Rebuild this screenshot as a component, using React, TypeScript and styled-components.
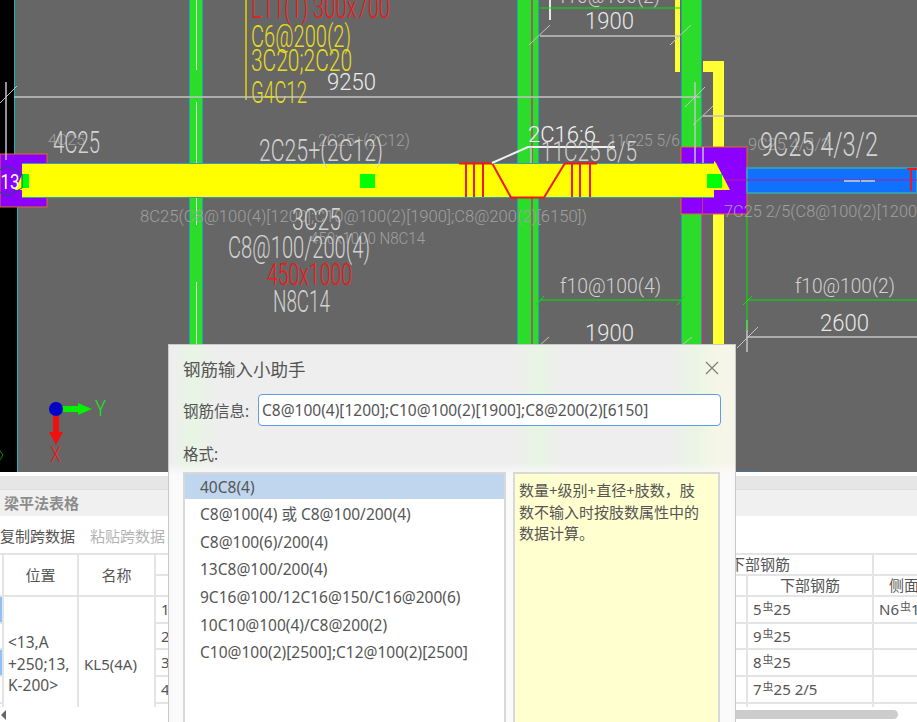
import styled, { createGlobalStyle } from "styled-components";

const GlobalStyle = createGlobalStyle`
	html, body {
		margin: 0;
		padding: 0;
		background: #ffffff;
		font-family: "Noto Sans", "Noto Sans CJK SC", sans-serif;
	}
`;

const Page = styled.div`
	position: relative;
	width: 917px;
	height: 722px;
	overflow: hidden;
	display: flex;
	flex-direction: column;
	color: #555555;
`;

const Viewport = styled.div`
	height: 472px;
	flex: none;
	background: #666666;
	svg {
		display: block;
	}
`;

const Panel = styled.section`
	flex: 1;
	min-height: 0;
	display: flex;
	flex-direction: column;
	background: #ffffff;
	padding-top: 4px;
`;

const PanelGrip = styled.div`
	height: 14px;
	background: #e6e6e6;
	border-bottom: 1px solid #dcdcdc;
`;

const PanelTitle = styled.h2`
	margin: 0;
	height: 26px;
	line-height: 26px;
	padding-left: 4px;
	background: #f0f0f0;
	font-size: 15px;
	font-weight: 700;
	color: #8c8c8c;
`;

const Toolbar = styled.div`
	height: 36px;
	flex: none;
	display: flex;
	align-items: center;
	gap: 15px;
	border-top: 1px solid #ffffff;
`;

const ToolButton = styled.span<{ $disabled?: boolean }>`
	font-size: 15px;
	color: ${(p) => (p.$disabled ? "#b4b4b4" : "#555555")};
`;

const TableClip = styled.div`
	height: 154px;
	flex: none;
	overflow: hidden;
`;

const Table = styled.table`
	width: 935px;
	table-layout: fixed;
	border-collapse: collapse;
	font-size: 15px;
	line-height: 19px;
	border-top: 2px solid #e4e4e4;
`;

const HeadCell = styled.th<{ $right?: number }>`
	padding: 0 ${(p) => p.$right ?? 0}px 0 0;
	font-weight: 400;
	text-align: ${(p) => (p.$right ? "right" : "center")};
	border-right: 2px solid #e4e4e4;
	border-bottom: 2px solid #e4e4e4;
	color: #555555;
	white-space: nowrap;
	overflow: hidden;
`;

const Cell = styled.td<{ $selected?: boolean }>`
	padding: 0 0 0 5px;
	border-right: 2px solid #e4e4e4;
	border-bottom: 2px solid #e4e4e4;
	white-space: nowrap;
	overflow: hidden;
	background: ${(p) => (p.$selected ? "#8fc2f5" : "transparent")};
`;

const WrapCell = styled(Cell)`
	white-space: normal;
	font-size: 15.5px;
	line-height: 21.5px;
	padding-left: 4px;
`;

const Grade = styled.sup`
	font-size: 11px;
	line-height: 0;
	vertical-align: 4px;
	margin: 0 0 0 1px;
`;

const ScrollTrack = styled.div`
	height: 15px;
	flex: none;
	display: flex;
	align-items: center;
`;

const ScrollArrow = styled.span`
	width: 0;
	height: 0;
	margin-left: 1px;
	border-top: 5px solid transparent;
	border-bottom: 5px solid transparent;
	border-right: 5px solid #666666;
`;

const ScrollThumb = styled.div`
	width: 400px;
	height: 9px;
	margin: 0 19px 0 auto;
	border-radius: 5px;
	background: #cccccc;
`;

const Dialog = styled.div`
	position: absolute;
	left: 168px;
	top: 344px;
	width: 568px;
	height: 378px;
	box-sizing: border-box;
	padding: 0 14px 0 14px;
	display: flex;
	flex-direction: column;
	border: 1px solid #c9c9c9;
	border-bottom: none;
	background:
		linear-gradient(to bottom, rgba(250, 250, 250, 0) 0, rgba(250, 250, 250, 0) 118px, #fafafa 130px),
		linear-gradient(
			to right,
			#eeeeee 0,
			#e8f5e4 24px,
			#eeeeee 46px,
			#eeeeee 345px,
			#e8f5e4 370px,
			#eeeeee 392px,
			#eeeeee 500px,
			#eaf5e4 525px,
			#f6f6e8 550px,
			#f5f5ea 568px
		);
`;

const DialogHead = styled.div`
	height: 49px;
	box-sizing: border-box;
	padding-bottom: 3px;
	flex: none;
	display: flex;
	align-items: center;
	justify-content: space-between;
`;

const DialogTitle = styled.h3`
	margin: 0;
	font-size: 17.5px;
	font-weight: 400;
	color: #555555;
`;

const CloseButton = styled.button`
	width: 16px;
	height: 16px;
	padding: 0;
	margin-right: 1px;
	border: none;
	background: none;
	color: #808080;
	display: flex;
	svg {
		display: block;
	}
`;

const Field = styled.div`
	height: 32px;
	flex: none;
	display: flex;
	align-items: center;
`;

const Label = styled.label`
	width: 75px;
	flex: none;
	font-size: 15.5px;
	color: #555555;
	white-space: nowrap;
`;

const Input = styled.input`
	flex: 1;
	min-width: 0;
	height: 32px;
	box-sizing: border-box;
	padding: 0 3px;
	border: 1.5px solid #5c9ceb;
	border-radius: 4px;
	outline: none;
	background: #ffffff;
	font-family: inherit;
	font-size: 15.5px;
	color: #555555;
`;

const FormatLabel = styled(Label)`
	height: 46px;
	flex: none;
	display: flex;
	align-items: center;
	padding-top: 8px;
	box-sizing: border-box;
`;

const Columns = styled.div`
	flex: 1;
	min-height: 0;
	display: flex;
	gap: 7px;
`;

const FormatList = styled.ul`
	width: 323px;
	box-sizing: border-box;
	margin: 0;
	padding: 0;
	list-style: none;
	background: #ffffff;
	border: 2px solid #d8d8d8;
	border-bottom: none;
	overflow: hidden;
`;

const FormatItem = styled.li<{ $selected?: boolean }>`
	height: 27.7px;
	line-height: 26px;
	padding-left: 15px;
	font-size: 15.5px;
	white-space: nowrap;
	color: #555555;
	background: ${(p) => (p.$selected ? "#c0d6ee" : "transparent")};
	&:first-child {
		height: 25px;
		margin-bottom: 2px;
	}
`;

const HelpBox = styled.div`
	width: 207px;
	box-sizing: border-box;
	padding: 6px 14px 0 4px;
	background: #ffffcf;
	border: 2px solid #d8d8d8;
	border-bottom: none;
	font-size: 15px;
	line-height: 21.5px;
	color: #555555;
`;

const CadLabel = styled.text<{ $weight?: number }>`
	font-family: "Roboto", "Liberation Sans", sans-serif;
	font-weight: ${(p) => p.$weight ?? 300};
`;

interface ICadText {
	text: string;
	x: number;
	y: number;
	w: number;
	size: number;
	color: string;
}

const GREY = "#d2d2d2";
const FAINT = "#a0a0a0";
const RED = "#f01818";
const YELLOW = "#e6dc1e";

const cadTexts: ICadText[] = [
	{ text: "L11(1) 300x700", x: 251, y: 18, w: 139, size: 32, color: RED },
	{ text: "C6@200(2)", x: 251, y: 47, w: 100, size: 32, color: YELLOW },
	{ text: "3C20;2C20", x: 251, y: 71, w: 101, size: 32, color: YELLOW },
	{ text: "G4C12", x: 251, y: 103, w: 56, size: 32, color: YELLOW },
	{ text: "9250", x: 327, y: 90, w: 49, size: 23, color: "#ececec" },
	{ text: "4C25", x: 48, y: 145, w: 37, size: 15, color: FAINT },
	{ text: "4C25", x: 53, y: 153, w: 47, size: 32, color: GREY },
	{ text: "2C25+(2C12)", x: 318, y: 146, w: 92, size: 16, color: FAINT },
	{ text: "2C25+(2C12)", x: 259, y: 161, w: 124, size: 31, color: GREY },
	{ text: "11C25 5/6", x: 608, y: 146, w: 72, size: 16, color: FAINT },
	{ text: "2C16:6", x: 528, y: 142, w: 68, size: 22, color: "#f2f2f2" },
	{ text: "11C25 6/5", x: 541, y: 161, w: 96, size: 28, color: GREY },
	{ text: "9C25 4/3/2", x: 748, y: 150, w: 82, size: 16, color: FAINT },
	{ text: "9C25 4/3/2", x: 760, y: 156, w: 118, size: 33, color: GREY },
	{ text: "8C25(C8@100(4)[1200];C10@100(2)[1900];C8@200(2)[6150])", x: 140, y: 222, w: 447, size: 16, color: FAINT },
	{ text: "7C25 2/5(C8@100(2)[1200", x: 724, y: 217, w: 193, size: 16, color: FAINT },
	{ text: "3C25", x: 292, y: 230, w: 49, size: 32, color: GREY },
	{ text: "450x1000 N8C14", x: 310, y: 244, w: 115, size: 16, color: FAINT },
	{ text: "C8@100/200(4)", x: 228, y: 258, w: 142, size: 32, color: GREY },
	{ text: "450x1000", x: 267, y: 285, w: 85, size: 32, color: RED },
	{ text: "N8C14", x: 273, y: 312, w: 57, size: 31, color: GREY },
	{ text: "f10@100(2)", x: 560, y: 3, w: 100, size: 21, color: GREY },
	{ text: "1900", x: 585, y: 29, w: 49, size: 23, color: "#e8e8e8" },
	{ text: "f10@100(4)", x: 560, y: 293, w: 101, size: 21, color: GREY },
	{ text: "1900", x: 585, y: 341, w: 49, size: 23, color: "#e8e8e8" },
	{ text: "f10@100(2)", x: 795, y: 293, w: 100, size: 21, color: GREY },
	{ text: "2600", x: 820, y: 331, w: 49, size: 23, color: "#e8e8e8" },
	{ text: "Y", x: 95, y: 416, w: 11, size: 22, color: "#18e818" },
	{ text: "X", x: 50, y: 462, w: 11, size: 22, color: RED },
];

const greenColumns = [
	{ x: 189, w: 14 },
	{ x: 517, w: 22 },
	{ x: 681, w: 21 },
];

const redStirrups = [466, 474, 483, 572, 580, 590];

const slashes = [
	[0, 103, 17, 86],
	[529, 45, 550, 25],
	[670, 45, 691, 25],
	[685, 107, 705, 87],
	[693, 125, 713, 106],
	[737, 348, 758, 327],
	[540, 345, 549, 337],
	[682, 345, 692, 337],
];

const greyLines = [
	[14, 97, 700, 97],
	[540, 36, 680, 36],
	[703, 116, 917, 116],
	[747, 337, 917, 337],
	[6, 82, 6, 160],
	[695, 82, 695, 163],
	[703, 147, 703, 163],
	[747, 320, 747, 352],
	[531, 147, 531, 163],
];

const greenLines = [
	[540, 8, 680, 8],
	[540, 300, 681, 300],
	[747, 300, 917, 300],
	[747, 214, 747, 330],
	[536, 305, 544, 296],
	[677, 305, 685, 296],
	[743, 305, 752, 296],
];

function CadDrawing() {
	return (
		<svg width="917" height="472" viewBox="0 0 917 472">
			<rect width="917" height="472" fill="#666666" />
			<rect width="14" height="160" fill="#000000" />
			<rect y="160" width="17" height="312" fill="#000000" />
			<rect x="14" width="1" height="160" fill="#17b8b8" />
			<rect x="17" y="198" width="1" height="274" fill="#17b8b8" />
			<path d="M-2 448 L3 455 L-2 463" fill="none" stroke="#0a8a0a" />
			<rect x="735" y="470" width="25" height="2" fill="#5a6e82" />

			{greenColumns.map((c) => (
				<g key={c.x}>
					<rect x={c.x} y="0" width={c.w} height="472" fill="#2bdc2b" />
					<rect x={c.x} y="0" width="1" height="472" fill="#1fa8a0" />
					<rect x={c.x + c.w - 1} y="0" width="1" height="472" fill="#1fa8a0" />
				</g>
			))}
			<path d="M196.5 0V70M196.5 102V163M196.5 198V225M196.5 282V345" stroke="#d8f0d8" strokeWidth="1" />
			<path d="M532 0V472" stroke="#b83c78" strokeWidth="1.5" />
			<path d="M702.5 214V472" stroke="#b83c78" strokeWidth="1.5" />

			<rect x="675" y="0" width="5" height="72" fill="#ffff33" />
			<path d="M703 61H724V472H713V72H703Z" fill="#ffff33" />
			<rect x="245" y="0" width="2" height="100" fill="#c8b820" />

			<rect x="0" y="154" width="47" height="53" fill="#8b00ff" stroke="#e06a20" />
			<rect x="681" y="147" width="66" height="67" fill="#8b00ff" stroke="#e06a20" />
			<path d="M702.5 198V214" stroke="#b83c78" strokeWidth="1" />

			<rect x="747" y="168" width="170" height="25" fill="#1070ff" stroke="#3a9ab0" strokeWidth="2" />
			<path d="M713 180H917" stroke="#b0209a" strokeWidth="1" />
			<path d="M844 181H860M861 181H875" stroke="#a8b8d0" strokeWidth="2" />
			<path d="M907 169H917M911 169V191" stroke={RED} strokeWidth="2" fill="none" />

			<path d="M22 163H714V161L716 163L730 190H714V198H22V190L15 190L22 175Z" fill="#ffff00" />
			<path d="M22 163.5H714M22 197.5H714" stroke="#3a9ab0" strokeWidth="1" />

			<path d="M459 163.5H492M565 163.5H597" stroke={RED} strokeWidth="2" />
			{redStirrups.map((x) => (
				<path key={x} d={`M${x} 163V197`} stroke={RED} strokeWidth="2" />
			))}
			<path d="M492 163L511 197.5H544L565 163" fill="none" stroke={RED} strokeWidth="2" />
			<path d="M492 163L528 147H615" fill="none" stroke="#f0f0f0" strokeWidth="2" />

			<rect x="22" y="174" width="7" height="14" fill="#00ff00" />
			<rect x="360" y="174" width="15" height="14" fill="#00ff00" />
			<rect x="707" y="174" width="15" height="14" fill="#00ff00" />

			<path d="M7 166L22 174V188L7 196L-8 188V174Z" fill="none" stroke="#105a5a" strokeWidth="1" />
			<CadLabel x="0.5" y="189" fill="#ffffff" fontSize="21" textLength="19" lengthAdjust="spacingAndGlyphs" $weight={400}>
				13
			</CadLabel>

			{greyLines.map(([x1, y1, x2, y2]) => (
				<line key={`${x1}-${y1}-${x2}`} x1={x1} y1={y1} x2={x2} y2={y2} stroke="#c4c4c4" strokeWidth="1.5" />
			))}
			{slashes.map(([x1, y1, x2, y2]) => (
				<line key={`${x1}-${y1}`} x1={x1} y1={y1} x2={x2} y2={y2} stroke="#c4c4c4" strokeWidth="1" />
			))}
			<path d="M550 0V20" stroke="#e8e8e8" strokeWidth="2" />
			{greenLines.map(([x1, y1, x2, y2]) => (
				<line key={`${x1}-${y1}-${x2}`} x1={x1} y1={y1} x2={x2} y2={y2} stroke="#00e800" strokeWidth="1" />
			))}

			{cadTexts.map((t) => (
				<CadLabel
					key={`${t.text}-${t.x}`}
					x={t.x}
					y={t.y}
					fill={t.color}
					fontSize={t.size}
					textLength={t.w}
					lengthAdjust="spacingAndGlyphs"
				>
					{t.text}
				</CadLabel>
			))}

			<path d="M56 406H78V403L92 409L78 415V412H56Z" fill="#00f000" />
			<path d="M53 409H59V432H63L56 445L49 432H53Z" fill="#f01010" />
			<circle cx="56" cy="409" r="7" fill="#0000c8" />
		</svg>
	);
}

const formats = [
	"40C8(4)",
	"C8@100(4) 或 C8@100/200(4)",
	"C8@100(6)/200(4)",
	"13C8@100/200(4)",
	"9C16@100/12C16@150/C16@200(6)",
	"10C10@100(4)/C8@200(2)",
	"C10@100(2)[2500];C12@100(2)[2500]",
];

const helpText = "数量+级别+直径+肢数\uFF0C肢数不输入时按肢数属性中的数据计算。";

const bottomBars = ["5", "9", "8", "7"];
const bottomSuffix = ["25", "25", "25", "25 2/5"];

function App() {
	return (
		<Page>
			<GlobalStyle />
			<Viewport>
				<CadDrawing />
			</Viewport>
			<Panel>
				<PanelGrip />
				<PanelTitle>梁平法表格</PanelTitle>
				<Toolbar>
					<ToolButton>复制跨数据</ToolButton>
					<ToolButton $disabled>粘贴跨数据</ToolButton>
				</Toolbar>
				<TableClip>
					<Table>
						<colgroup>
							<col width="3" />
							<col width="75" />
							<col width="77" />
							<col width="28" />
							<col width="564" />
							<col width="126" />
							<col width="62" />
						</colgroup>
						<tbody>
							<tr style={{ height: 21 }}>
								<HeadCell rowSpan={2} />
								<HeadCell rowSpan={2}>位置</HeadCell>
								<HeadCell rowSpan={2}>名称</HeadCell>
								<HeadCell colSpan={3} $right={82}>
									下部钢筋
								</HeadCell>
								<HeadCell />
							</tr>
							<tr style={{ height: 21 }}>
								<HeadCell colSpan={2} />
								<HeadCell>下部钢筋</HeadCell>
								<HeadCell>侧面</HeadCell>
							</tr>
							{bottomBars.map((count, i) => (
								<tr key={count} style={{ height: 26.7 }}>
									<Cell $selected={i === 0 || i === 2} />
									{i === 0 && <WrapCell rowSpan={5}>&lt;13,A +250;13, K-200&gt;</WrapCell>}
									{i === 0 && <Cell rowSpan={5}>KL5(4A)</Cell>}
									<Cell>{i + 1}</Cell>
									<Cell />
									<Cell>
										{count}
										<Grade>虫</Grade>
										{bottomSuffix[i]}
									</Cell>
									<Cell>
										{i === 0 && (
											<>
												N6
												<Grade>虫</Grade>
												14
											</>
										)}
									</Cell>
								</tr>
							))}
							<tr style={{ height: 30 }}>
								<Cell />
								<Cell />
								<Cell />
								<Cell />
								<Cell />
							</tr>
						</tbody>
					</Table>
				</TableClip>
				<ScrollTrack>
					<ScrollArrow />
					<ScrollThumb />
				</ScrollTrack>
			</Panel>
			<Dialog>
				<DialogHead>
					<DialogTitle>钢筋输入小助手</DialogTitle>
					<CloseButton aria-label="关闭">
						<svg width="16" height="16" viewBox="0 0 16 16">
							<path d="M2 2L14 14M14 2L2 14" stroke="currentColor" strokeWidth="1.3" />
						</svg>
					</CloseButton>
				</DialogHead>
				<Field>
					<Label>钢筋信息:</Label>
					<Input readOnly value="C8@100(4)[1200];C10@100(2)[1900];C8@200(2)[6150]" />
				</Field>
				<FormatLabel>格式:</FormatLabel>
				<Columns>
					<FormatList>
						{formats.map((f, i) => (
							<FormatItem key={f} $selected={i === 0}>
								{f}
							</FormatItem>
						))}
					</FormatList>
					<HelpBox>{helpText}</HelpBox>
				</Columns>
			</Dialog>
		</Page>
	);
}

export default App;
